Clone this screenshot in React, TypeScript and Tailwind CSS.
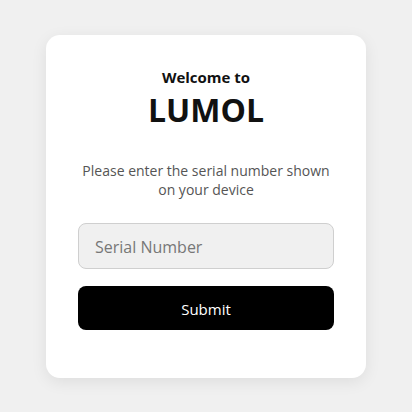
export default function App() {
  return (
    <div
      className="min-h-screen w-full bg-[#f0f0f0] flex items-center justify-center"
      style={{ fontFamily: '"Open Sans", "Noto Sans", sans-serif' }}
    >
      <div className="w-[320px] bg-white rounded-[14px] shadow-[0_4px_16px_rgba(0,0,0,0.08)] px-8 pt-[32px] pb-[48px] flex flex-col items-center">
        <p className="text-[15px] font-bold text-[#111] leading-[20px]">Welcome to</p>
        <h1 className="mt-[1px] text-[32px] font-bold text-[#111] leading-[44px]">LUMOL</h1>
        <p className="mt-[29px] text-[14px] text-[#555] text-center leading-[19px]">
          Please enter the serial number shown on your device
        </p>
        <input
          placeholder="Serial Number"
          className="mt-[24px] w-full h-[46px] rounded-[8px] border border-[#cfcfcf] bg-[#f0f0f0] px-4 pt-[2px] text-[16px] text-[#333] placeholder:text-[#777] outline-none"
        />
        <button className="mt-[17px] w-full h-[44px] rounded-[8px] bg-black text-white text-[15px] pt-[3px]">
          Submit
        </button>
      </div>
    </div>
  );
}
